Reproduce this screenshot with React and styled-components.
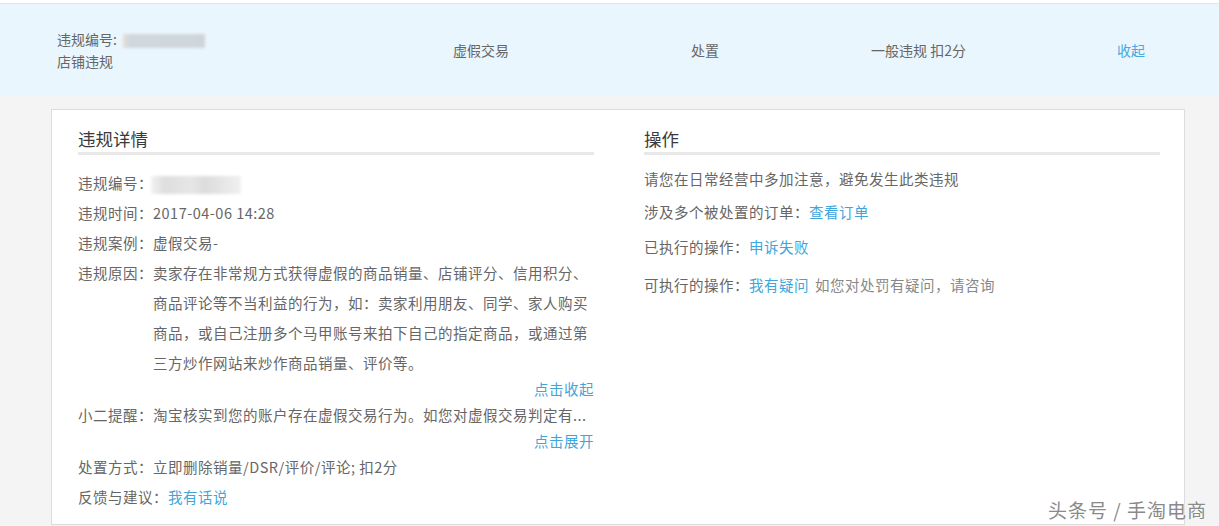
import React from "react";
import styled, { createGlobalStyle } from "styled-components";

const Global = createGlobalStyle`
  html, body { margin: 0; padding: 0; }
  body {
    background: #f4f4f4;
    font-family: "Noto Sans CJK SC", "Noto Sans", "Liberation Sans", sans-serif;
    color: #666;
    font-size: 14px;
  }
`;

const Page = styled.div`
  width: 1219px;
  height: 526px;
  overflow: hidden;
  position: relative;
  border-top: 3px solid #fff;
`;

const Band = styled.div`
  border-top: 1px solid #e2e6e8;
  background: #eaf6fd;
  height: 92px;
  display: grid;
  grid-template-columns: 396px 238px 180px 246px auto;
  align-items: center;
  padding-left: 57px;
  font-size: 14px;
  color: #666;
`;

const BandCell = styled.div`
  line-height: 22px;
  color: ${(p) => (p.$link ? "#46a8dc" : "#666")};
`;

const Blur = styled.span`
  display: inline-block;
  vertical-align: middle;
  width: ${(p) => p.$w}px;
  height: ${(p) => p.$h}px;
  background: ${(p) => p.$bg};
  filter: blur(1.5px);
  margin-left: ${(p) => p.$ml || 0}px;
`;

const Card = styled.div`
  margin: 13px 0 0 51px;
  width: 1134px;
  height: 416px;
  background: #fff;
  border: 1px solid #dcdcdc;
  padding: 18px 24px 0 26px;
  box-sizing: border-box;
  display: grid;
  grid-template-columns: 516px 516px;
  column-gap: 50px;
  align-items: start;
`;

const Column = styled.div`
  display: flex;
  flex-direction: column;
`;

const Heading = styled.div`
  font-size: 17.5px;
  color: #3a3a3a;
  line-height: 22px;
  padding-bottom: 2px;
  border-bottom: 3px solid #e8e8e8;
`;

const Rows = styled.div`
  margin-top: ${(p) => p.$mt}px;
  display: flex;
  flex-direction: column;
`;

const Row = styled.div`
  display: flex;
  line-height: 30px;
  font-size: 14.5px;
  letter-spacing: 0.5px;
  margin-top: ${(p) => p.$mt || 0}px;
`;

const Label = styled.span`
  flex: none;
  color: #666;
`;

const Value = styled.span`
  flex: 1;
  min-width: 0;
  color: #666;
  white-space: ${(p) => (p.$nowrap ? "nowrap" : "normal")};
`;

const Link = styled.a`
  color: #3ea6dc;
  text-decoration: none;
  cursor: pointer;
`;

const Toggle = styled.div`
  text-align: right;
  line-height: 22px;
  font-size: 14.5px;
  letter-spacing: 0.5px;
  color: #3ea6dc;
`;

const Hint = styled.span`
  color: #888;
  margin-left: 6px;
`;

const Watermark = styled.div`
  position: absolute;
  right: 12px;
  bottom: 6px;
  font-size: 19px;
  color: #8a8a8a;
  text-shadow: 0 0 2px #fff, 0 0 2px #fff;
  letter-spacing: 1px;
`;

export default function App() {
  return (
    <>
      <Global />
      <Page>
        <Band>
          <BandCell>
            <div>
              违规编号:
              <Blur $w={82} $h={14} $bg="linear-gradient(90deg,#e6dcd4 0,#d0d8dd 8%,#cfd6db 100%)" $ml={6} />
            </div>
            <div>店铺违规</div>
          </BandCell>
          <BandCell>虚假交易</BandCell>
          <BandCell>处置</BandCell>
          <BandCell>一般违规 扣2分</BandCell>
          <BandCell $link>收起</BandCell>
        </Band>
        <Card>
          <Column>
            <Heading>违规详情</Heading>
            <Rows $mt={13}>
              <Row>
                <Label>违规编号：</Label>
                <Value>
                  <Blur $w={90} $h={18} $bg="linear-gradient(90deg,#f2f2f2 0,#dedede 15%,#e6e6e6 45%,#dcdcdc 60%,#f0f0f0 100%)" $ml={-2} />
                </Value>
              </Row>
              <Row>
                <Label>违规时间：</Label>
                <Value>2017-04-06 14:28</Value>
              </Row>
              <Row>
                <Label>违规案例：</Label>
                <Value>虚假交易-</Value>
              </Row>
              <Row>
                <Label>违规原因：</Label>
                <Value>
                  卖家存在非常规方式获得虚假的商品销量、店铺评分、信用积分、商品评论等不当利益的行为，如：卖家利用朋友、同学、家人购买商品，或自己注册多个马甲账号来拍下自己的指定商品，或通过第三方炒作网站来炒作商品销量、评价等。
                </Value>
              </Row>
              <Toggle>点击收起</Toggle>
              <Row>
                <Label>小二提醒：</Label>
                <Value $nowrap>淘宝核实到您的账户存在虚假交易行为。如您对虚假交易判定有...</Value>
              </Row>
              <Toggle>点击展开</Toggle>
              <Row>
                <Label>处置方式：</Label>
                <Value>立即删除销量/DSR/评价/评论; 扣2分</Value>
              </Row>
              <Row>
                <Label>反馈与建议：</Label>
                <Value>
                  <Link>我有话说</Link>
                </Value>
              </Row>
            </Rows>
          </Column>
          <Column>
            <Heading>操作</Heading>
            <Rows $mt={9}>
              <Row>
                <Value>请您在日常经营中多加注意，避免发生此类违规</Value>
              </Row>
              <Row $mt={3}>
                <Label>涉及多个被处置的订单：</Label>
                <Value>
                  <Link>查看订单</Link>
                </Value>
              </Row>
              <Row $mt={5}>
                <Label>已执行的操作：</Label>
                <Value>
                  <Link>申诉失败</Link>
                </Value>
              </Row>
              <Row $mt={8}>
                <Label>可执行的操作：</Label>
                <Value>
                  <Link>我有疑问</Link>
                  <Hint>如您对处罚有疑问，请咨询</Hint>
                </Value>
              </Row>
            </Rows>
          </Column>
        </Card>
        <Watermark>头条号 / 手淘电商</Watermark>
      </Page>
    </>
  );
}
